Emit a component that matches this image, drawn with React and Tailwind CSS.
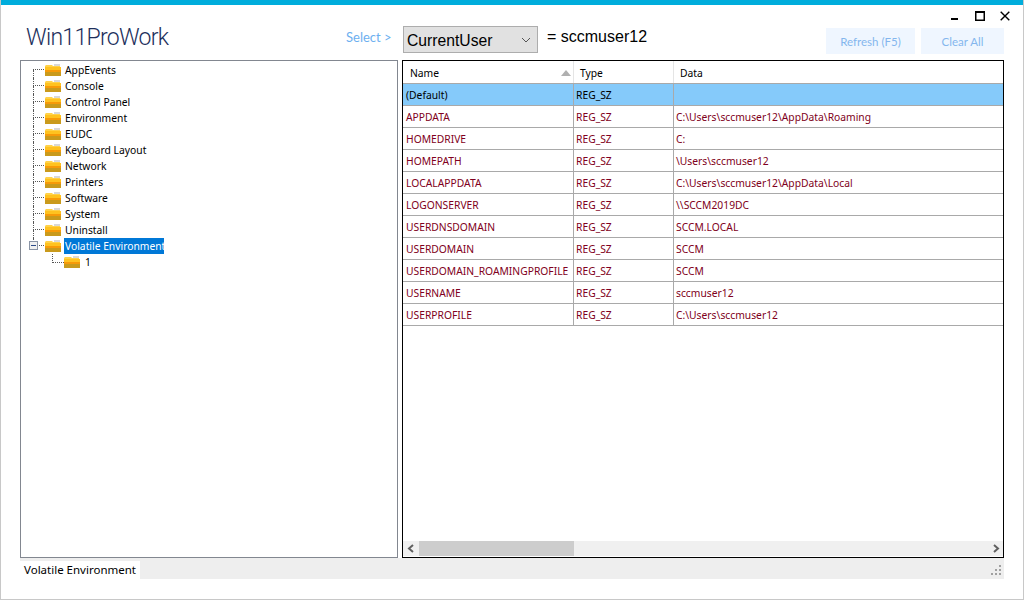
const treeItems = ["AppEvents","Console","Control Panel","Environment","EUDC","Keyboard Layout","Network","Printers","Software","System","Uninstall"];
const rows = [
  ["APPDATA","REG_SZ","C:\\Users\\sccmuser12\\AppData\\Roaming"],
  ["HOMEDRIVE","REG_SZ","C:"],
  ["HOMEPATH","REG_SZ","\\Users\\sccmuser12"],
  ["LOCALAPPDATA","REG_SZ","C:\\Users\\sccmuser12\\AppData\\Local"],
  ["LOGONSERVER","REG_SZ","\\\\SCCM2019DC"],
  ["USERDNSDOMAIN","REG_SZ","SCCM.LOCAL"],
  ["USERDOMAIN","REG_SZ","SCCM"],
  ["USERDOMAIN_ROAMINGPROFILE","REG_SZ","SCCM"],
  ["USERNAME","REG_SZ","sccmuser12"],
  ["USERPROFILE","REG_SZ","C:\\Users\\sccmuser12"],
];

function Folder() {
  return (
    <svg width="16" height="12" viewBox="0 0 16 12" className="shrink-0">
      <path d="M9 0h6v3H9z" fill="#d8d8d8" />
      <path d="M1 1h6l1 1h7v1H0V2z" fill="#ffd24a" />
      <rect x="0" y="3" width="16" height="3" fill="#ffc21f" />
      <rect x="0" y="6" width="16" height="2" fill="#f79a08" />
      <rect x="0" y="8" width="16" height="4" fill="#c99a1c" />
    </svg>
  );
}

function Connector({ first, last }) {
  return (
    <div className="w-[12px] h-[16px] shrink-0 flex flex-col">
      <div className={`h-[8px] w-[11px] border-b border-dotted border-[#555] ${first ? "" : "border-l"}`} />
      {last ? null : <div className={`h-[8px] w-[11px] border-l border-dotted border-[#555]`} />}
    </div>
  );
}

function Row({ cells, selected }) {
  const bg = selected ? "bg-[#85CAFA] text-black" : "text-[#800020]";
  return (
    <div className={`grid grid-cols-[171px_100px_1fr] h-[22px] border-b border-[#a9a9a9] ${bg}`}>
      <div className="pl-[3px] pt-[2px] flex items-center border-r border-[#a9a9a9] whitespace-nowrap">{cells[0]}</div>
      <div className="pl-[2px] pt-[2px] flex items-center border-r border-[#a9a9a9] whitespace-nowrap">{cells[1]}</div>
      <div className="pl-[2px] pt-[2px] flex items-center whitespace-nowrap">{cells[2]}</div>
    </div>
  );
}

export default function App() {
  return (
    <div className="w-[1024px] h-[600px] flex flex-col bg-white border-b border-x border-[#c8c8c8] font-['Noto_Sans',sans-serif] text-[10.3px] leading-none text-black overflow-hidden">
      <div className="h-[5px] -mx-px bg-[#00ADDC] shrink-0" />
      <div className="h-[55px] flex shrink-0 pl-[25px] pr-[19px]">
        <div className="w-[320px] pt-[20px] font-['Roboto',sans-serif] font-light text-[23px] tracking-[-0.7px] leading-[26px] text-[#1d2f5c] whitespace-nowrap">Win11ProWork</div>
        <div className="pt-[26px] w-[57px] text-[#6db0f0] text-[13px] font-['Lato',sans-serif] leading-[13px] whitespace-nowrap">Select &gt;</div>
        <div className="mt-[21px] w-[135px] h-[27px] bg-[#e1e1e1] border border-[#adadad] flex items-center justify-between pl-[3px] pr-[6px] text-[15.7px] font-['Liberation_Sans',sans-serif]">
          <span className="pt-[2px]">CurrentUser</span>
          <svg width="10" height="6" viewBox="0 0 10 6"><path d="M1 1l4 4 4-4" fill="none" stroke="#555" strokeWidth="1" /></svg>
        </div>
        <div className="pl-[9px] pt-[24px] text-[16px] leading-[16px] font-['Liberation_Sans',sans-serif] whitespace-nowrap">= sccmuser12</div>
        <div className="flex-1 flex flex-col items-end">
          <div className="h-[23px] flex items-start -mr-[6px] pt-[6px]">
            <svg width="10" height="10" viewBox="0 0 10 10" className="mr-[16px]"><rect x="2" y="7" width="7" height="2" fill="#000" /></svg>
            <svg width="10" height="10" viewBox="0 0 10 10" className="mr-[15px]"><rect x="0.75" y="0.75" width="8.5" height="8.5" fill="none" stroke="#000" strokeWidth="1.5" /><rect x="0" y="0" width="10" height="2" fill="#000" /></svg>
            <svg width="10" height="10" viewBox="0 0 10 10"><path d="M.7.7l8.6 8.6M9.3.7L.7 9.3" stroke="#000" strokeWidth="1.4" fill="none" /></svg>
          </div>
          <div className="flex gap-[6px] text-[#84b6ee] text-[11.5px] font-['Lato',sans-serif]">
            <div className="w-[89px] h-[26px] bg-[#eff6ff] flex items-center justify-center pt-[1px]">Refresh (F5)</div>
            <div className="w-[83px] h-[26px] bg-[#eff6ff] flex items-center justify-center pt-[1px]">Clear All</div>
          </div>
        </div>
      </div>
      <div className="flex-1 min-h-0 flex flex-col pl-[19px] pr-[19px]">
        <div className="h-[498px] flex gap-[4px] shrink-0">
          <div className="w-[378px] border border-[#828790] pt-[1px] pl-[12px]">
            {treeItems.map((t, i) => (
              <div key={t} className="flex items-center h-[16px]">
                <Connector first={i === 0} />
                <Folder />
                <span className="pl-[4px] pt-[1px]">{t}</span>
              </div>
            ))}
            <div className="relative flex items-center h-[16px]">
              <Connector last />
              <div className="absolute left-[-4px] top-[3px] w-[9px] h-[9px] bg-[#f0f0f0] border border-[#8a94a6] flex items-center justify-center">
                <div className="w-[5px] h-px bg-[#2b4a8a]" />
              </div>
              <Folder />
              <span className="ml-[3px] h-[16px] w-[100px] pl-[1px] pt-[1px] bg-[#0078D7] text-white flex items-center whitespace-nowrap">Volatile Environment</span>
            </div>
            <div className="flex items-center h-[16px] pl-[19px]">
              <div className="w-[12px] h-[9px] self-start shrink-0 border-l border-b border-dotted border-[#555]" />
              <Folder />
              <span className="pl-[5px] pt-[1px]">1</span>
            </div>
          </div>
          <div className="flex-1 min-w-0 border border-black flex flex-col">
            <div className="grid grid-cols-[171px_100px_1fr] h-[23px] border-b border-[#a9a9a9] shrink-0">
              <div className="relative pl-[7px] pt-[2px] flex items-center border-r border-[#e5e5e5]">
                Name
                <svg width="10" height="6" viewBox="0 0 10 6" className="absolute right-[2px] top-[9px]"><path d="M5 0l5 6H0z" fill="#b0b0b0" /></svg>
              </div>
              <div className="pl-[6px] pt-[2px] flex items-center border-r border-[#e5e5e5]">Type</div>
              <div className="pl-[6px] pt-[2px] flex items-center">Data</div>
            </div>
            <Row cells={["(Default)","REG_SZ",""]} selected />
            {rows.map((r) => <Row key={r[0]} cells={r} />)}
            <div className="flex-1" />
            <div className="h-[15px] bg-[#f0f0f0] flex items-center shrink-0 mb-[1px]">
              <div className="w-[16px] flex justify-center">
                <svg width="8" height="9" viewBox="0 0 8 9"><path d="M6 1L2 4.5 6 8" fill="none" stroke="#606060" strokeWidth="2" /></svg>
              </div>
              <div className="w-[155px] h-[15px] bg-[#cdcdcd]" />
              <div className="flex-1" />
              <div className="w-[15px] flex justify-center">
                <svg width="8" height="9" viewBox="0 0 8 9"><path d="M2 1l4 3.5L2 8" fill="none" stroke="#606060" strokeWidth="2" /></svg>
              </div>
            </div>
          </div>
        </div>
        <div className="h-[21px] bg-[#eeeeee] flex items-end justify-between shrink-0">
          <div className="w-[120px] h-[18px] bg-white pl-[4px] flex items-center text-[11.5px] whitespace-nowrap">Volatile Environment</div>
          <svg width="12" height="12" viewBox="0 0 12 12" className="mb-[2px] mr-[2px]" fill="#a0a0a0">
            <rect x="9" y="0" width="2" height="2" />
            <rect x="5" y="4" width="2" height="2" /><rect x="9" y="4" width="2" height="2" />
            <rect x="1" y="8" width="2" height="2" /><rect x="5" y="8" width="2" height="2" /><rect x="9" y="8" width="2" height="2" />
          </svg>
        </div>
      </div>
    </div>
  );
}
